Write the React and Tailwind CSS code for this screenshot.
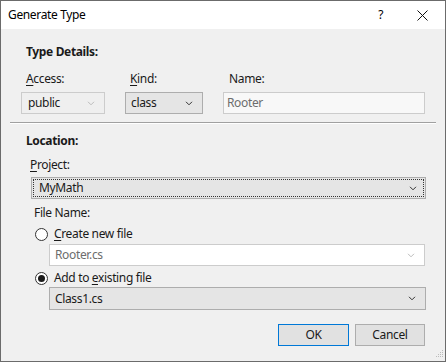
import React from "react";

const font = { fontFamily: '"Segoe UI", "Noto Sans", "Open Sans", sans-serif' };

function Chevron({ color = "#606060" }) {
  return (
    <svg width="8" height="5" viewBox="0 0 8 5" className="shrink-0">
      <path d="M1 0.8 L4 3.8 L7 0.8" fill="none" stroke={color} strokeWidth="1" />
    </svg>
  );
}

function U({ children }) {
  return <span className="underline underline-offset-2 decoration-1">{children}</span>;
}

function Radio({ checked }) {
  return (
    <div className="w-[13px] h-[13px] rounded-full border border-[#333] bg-white flex items-center justify-center shrink-0">
      {checked && <div className="w-[7px] h-[7px] rounded-full bg-[#1a1a1a]" />}
    </div>
  );
}

export default function App() {
  return (
    <div
      className="w-[446px] h-[362px] border border-[#6b6b6b] bg-[#f0f0f0] flex flex-col text-[12px] tracking-[-0.35px] text-[#1a1a1a] leading-[16px] overflow-hidden"
      style={font}
    >
      {/* Title bar */}
      <div className="h-[28px] bg-white flex items-center pl-[7px] shrink-0">
        <span className="text-[12px] text-black">Generate Type</span>
        <div className="ml-auto flex items-center">
          <span className="text-[12px] text-black mr-[34px]">?</span>
          <svg width="11" height="11" viewBox="0 0 11 11" className="mr-[17px]">
            <path d="M0.5 0.5 L10.5 10.5 M10.5 0.5 L0.5 10.5" stroke="#111" strokeWidth="1" />
          </svg>
        </div>
      </div>

      {/* Body */}
      <div className="flex flex-col pt-[15px]">
        <div className="pl-[25px] font-bold h-[16px]">Type Details:</div>

        <div className="flex mt-[11px] pl-[20px] h-[16px]">
          <div className="w-[104px] pl-[5px]"><U>A</U>ccess:</div>
          <div className="w-[98px] pl-[5px]"><U>K</U>ind:</div>
          <div className="pl-[6px]">Name:</div>
        </div>

        <div className="flex mt-[5px] pl-[20px] h-[22px]">
          <div className="w-[84px] h-[22px] border border-[#cccccc] bg-[#efefef] flex items-center pl-[6px] pr-[9px] text-[#1a1a1a]">
            <span>public</span>
            <span className="ml-auto"><Chevron color="#bcbcbc" /></span>
          </div>
          <div className="w-[78px] h-[22px] border border-[#adadad] bg-[#e5e5e5] flex items-center pl-[5px] pr-[9px] ml-[20px]">
            <span>class</span>
            <span className="ml-auto"><Chevron color="#333" /></span>
          </div>
          <div className="w-[202px] h-[22px] border border-[#cccccc] bg-[#f8f8f8] flex items-center pl-[3px] text-[#6d6d6d] ml-[20px]">
            Rooter
          </div>
        </div>

        <div className="mt-[8px] ml-[9px] w-[426px] h-[2px] border-t border-[#a0a0a0] border-b border-b-white" />

        <div className="pl-[25px] font-bold h-[16px] mt-[9px]">Location:</div>

        <div className="pl-[29px] mt-[8px] h-[16px]"><U>P</U>roject:</div>

        <div className="ml-[30px] mt-[4px] w-[395px] h-[22px] border border-[#adadad] bg-[#e5e5e5] p-[1px]">
          <div className="w-full h-full border border-dotted border-[#333] flex items-center pl-[5px] pr-[6px]">
            <span>MyMath</span>
            <span className="ml-auto"><Chevron color="#333" /></span>
          </div>
        </div>

        <div className="pl-[33px] mt-[6px] h-[16px]">File Name:</div>

        <div className="flex items-center pl-[34px] mt-[5px] h-[16px]">
          <Radio />
          <span className="ml-[6px]"><U>C</U>reate new file</span>
        </div>

        <div className="ml-[48px] mt-[2px] w-[376px] h-[22px] border border-[#cccccc] bg-white flex items-center pl-[5px] pr-[9px] text-[#6d6d6d]">
          <span>Rooter.cs</span>
          <span className="ml-auto"><Chevron color="#bcbcbc" /></span>
        </div>

        <div className="flex items-center pl-[34px] mt-[4px] h-[16px]">
          <Radio checked />
          <span className="ml-[6px]">Add to <U>e</U>xisting file</span>
        </div>

        <div className="ml-[48px] mt-[1px] w-[377px] h-[23px] border border-[#adadad] bg-[#e5e5e5] flex items-center pl-[5px] pr-[9px]">
          <span>Class1.cs</span>
          <span className="ml-auto"><Chevron color="#333" /></span>
        </div>

        <div className="flex justify-end pr-[20px] mt-[14px] gap-[6px]">
          <div className="w-[71px] h-[22px] border border-[#0078d7] bg-[#e1e1e1] flex items-center justify-center">OK</div>
          <div className="w-[70px] h-[22px] border border-[#adadad] bg-[#e1e1e1] flex items-center justify-center">Cancel</div>
        </div>

        <div className="flex justify-end pr-[1px] mt-[4px]">
          <svg width="10" height="10" viewBox="0 0 10 10">
            <g fill="#bcbcbc">
              <rect x="8" y="0" width="1" height="1" />
              <rect x="6" y="2" width="1" height="1" />
              <rect x="8" y="2" width="1" height="1" />
              <rect x="4" y="4" width="1" height="1" />
              <rect x="6" y="4" width="1" height="1" />
              <rect x="8" y="4" width="1" height="1" />
              <rect x="2" y="6" width="1" height="1" />
              <rect x="4" y="6" width="1" height="1" />
              <rect x="6" y="6" width="1" height="1" />
              <rect x="8" y="6" width="1" height="1" />
            </g>
          </svg>
        </div>
      </div>
    </div>
  );
}
